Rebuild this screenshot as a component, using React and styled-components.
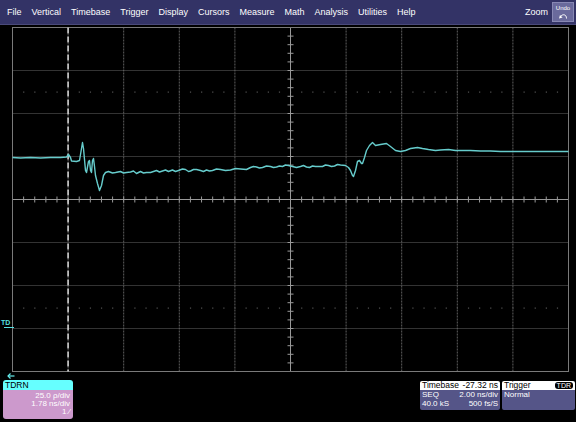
import styled, { createGlobalStyle } from "styled-components";

const GlobalStyle = createGlobalStyle`
  html, body { margin: 0; padding: 0; background: #000; }
  body { font-family: "Liberation Sans", Arial, sans-serif; }
`;

const Scope = styled.div`
  width: 576px;
  height: 422px;
  background: #000;
  overflow: hidden;
  display: flex;
  flex-direction: column;
`;

const MenuBar = styled.div`
  height: 24px;
  background: #333366;
  border-bottom: 1px solid #4a4a7a;
  display: flex;
  align-items: center;
  gap: 10px;
  padding: 0 2px 0 7px;
  color: #fff;
  font-size: 9px;
`;
const MenuItem = styled.span``;
const Spacer = styled.div`
  flex: 1;
`;
const ZoomGroup = styled.div`
  display: flex;
  align-items: center;
  gap: 4px;
`;
const UndoButton = styled.div`
  width: 22px;
  height: 20px;
  box-sizing: border-box;
  background: #6a6a9c;
  border: 1px solid #8888b4;
  display: flex;
  flex-direction: column;
  align-items: center;
  justify-content: center;
  font-size: 6px;
  line-height: 7px;
`;

const ScreenRow = styled.div`
  margin-top: 2px;
  height: 345px;
  display: flex;
`;
const Gutter = styled.div`
  width: 12px;
  position: relative;
`;
const TdMarker = styled.div`
  position: absolute;
  left: 1px;
  top: 292px;
  color: #55e0e0;
  font-size: 7px;
  font-weight: bold;
  line-height: 8px;
`;
const TdBar = styled.div`
  margin: 0 0 0 3px;
  width: 10px;
  height: 1px;
  background: #55e0e0;
`;

const Footer = styled.div`
  flex: 1;
  display: flex;
  justify-content: space-between;
  align-items: flex-start;
  padding: 0 1px 0 3px;
`;
const LeftCol = styled.div`
  display: flex;
  flex-direction: column;
`;
const BackArrow = styled.div`
  height: 8px;
  padding-left: 4px;
  display: flex;
  align-items: center;
`;
const TraceBox = styled.div`
  width: 70px;
  border-radius: 3px;
  overflow: hidden;
`;
const TraceHeader = styled.div`
  height: 10px;
  line-height: 10px;
  background: #66ffff;
  color: #000;
  font-size: 8.5px;
  padding-left: 2px;
`;
const TraceBody = styled.div`
  height: 29px;
  box-sizing: border-box;
  background: #cc99cc;
  color: #fff;
  font-size: 8px;
  line-height: 7.8px;
  text-align: right;
  padding: 2px 3px 0 0;
`;

const RightGroup = styled.div`
  display: flex;
  gap: 2px;
  margin-top: 9px;
`;
const InfoBox = styled.div`
  width: ${(p) => p.$w}px;
  border-radius: 2px;
  overflow: hidden;
`;
const InfoHeader = styled.div`
  height: 9px;
  line-height: 9px;
  background: #fff;
  color: #000;
  font-size: 8.5px;
  display: flex;
  justify-content: space-between;
  align-items: center;
  padding: 0 2px;
`;
const InfoBody = styled.div`
  height: 20px;
  box-sizing: border-box;
  background: #555588;
  color: #fff;
  font-size: 8px;
  line-height: 8.5px;
  padding: 1px 2px 0;
`;
const InfoRow = styled.div`
  display: flex;
  justify-content: space-between;
`;
const Badge = styled.span`
  background: #000;
  color: #fff;
  border-radius: 3px;
  font-size: 7px;
  line-height: 7px;
  padding: 0 2px;
`;

const menus = [
  "File",
  "Vertical",
  "Timebase",
  "Trigger",
  "Display",
  "Cursors",
  "Measure",
  "Math",
  "Analysis",
  "Utilities",
  "Help",
];

// trace points in page coords, shifted to the grid origin (12,27)
const trace = [
  [12, 157], [20, 157.5], [30, 157], [40, 157.5], [50, 157], [60, 157],
  [66, 156.5], [68, 154], [70, 157], [71, 160.5], [76, 161], [79, 160],
  [81, 148], [82, 142], [83, 148], [85, 170], [86, 172], [88, 161],
  [89, 160], [90, 170], [91, 172], [92, 160], [93, 158], [94, 166],
  [95, 175], [97, 183], [99, 190], [101, 185], [103, 175], [105, 172],
  [108, 171], [112, 172.5], [115, 172], [120, 171], [123, 172.5], [126, 172],
  [130, 171.5], [133, 170.5], [136, 173], [140, 171], [143, 172.5], [146, 172],
  [150, 172], [153, 171], [156, 170], [159, 171.5], [162, 170.5], [165, 169.5],
  [168, 171], [172, 169.5], [175, 171], [178, 170], [182, 168.5], [185, 169],
  [188, 171], [190, 170.5], [193, 169], [196, 169], [200, 170], [203, 171],
  [206, 169.5], [209, 170.5], [212, 170], [216, 168.5], [220, 169], [225, 170],
  [230, 169.5], [235, 168], [240, 168.5], [246, 169], [250, 167], [253, 166],
  [256, 166.5], [259, 167.5], [262, 167], [266, 165.5], [270, 166], [273, 167],
  [276, 166.5], [279, 165.5], [282, 166], [285, 164.5], [288, 165], [292, 166],
  [296, 167], [300, 166], [303, 165], [306, 166.5], [309, 167], [312, 165.5],
  [315, 166], [318, 166], [322, 166], [325, 164.5], [328, 165], [331, 166],
  [334, 165.5], [337, 164], [340, 164.5], [345, 165],
  [348, 167], [350, 170], [352, 175], [353, 176], [355, 170], [357, 161],
  [359, 160], [361, 163], [362, 163], [364, 157], [366, 150], [369, 145],
  [372, 142], [375, 145], [380, 144], [386, 143], [390, 146], [395, 150],
  [400, 151], [405, 150], [410, 148], [417, 147], [422, 148], [428, 149],
  [435, 150], [440, 149.5], [448, 149], [455, 150], [462, 150], [470, 150],
  [480, 150.5], [490, 150.5], [500, 151], [520, 151], [540, 151], [568, 151],
];

const W = 556;
const H = 344;
const DX = W / 10;
const DY = H / 8;

function Graticule() {
  const vLines = [];
  const hLines = [];
  const ticks = [];
  const dots = [];
  for (let i = 1; i < 10; i++) {
    if (i === 5) continue;
    vLines.push(
      <line key={"v" + i} x1={i * DX} y1={0} x2={i * DX} y2={H} stroke="#5e5e5e" strokeDasharray="2 1" />
    );
  }
  for (let j = 1; j < 8; j++) {
    if (j === 4) continue;
    hLines.push(
      <line key={"h" + j} x1={0} y1={j * DY} x2={W} y2={j * DY} stroke="#666" strokeDasharray="1 1" />
    );
  }
  for (let k = 1; k < 50; k++) {
    const x = (k * DX) / 5;
    ticks.push(<line key={"tx" + k} x1={x} y1={H / 2 - 3} x2={x} y2={H / 2 + 3} stroke="#999" />);
    dots.push(<rect key={"da" + k} x={x - 0.5} y={64} width={1.2} height={1.2} fill="#555" />);
    dots.push(<rect key={"db" + k} x={x - 0.5} y={280} width={1.2} height={1.2} fill="#555" />);
  }
  for (let k = 1; k < 40; k++) {
    const y = (k * DY) / 5;
    ticks.push(<line key={"ty" + k} x1={W / 2 - 3} y1={y} x2={W / 2 + 3} y2={y} stroke="#999" />);
  }
  const d = trace
    .map(([x, y], i) => `${i ? "L" : "M"}${x - 12} ${y - 27}`)
    .join(" ");

  return (
    <svg width={W + 1} height={H + 1} style={{ display: "block" }}>
      <g transform="translate(0.5 0.5)">
        {vLines}
        {hLines}
        {dots}
        <line x1={W / 2} y1={0} x2={W / 2} y2={H} stroke="#999" />
        <line x1={0} y1={H / 2} x2={W} y2={H / 2} stroke="#999" />
        {ticks}
        <rect x={0} y={0} width={W} height={H} fill="none" stroke="#7a7a7a" />
        <line x1={DX} y1={0} x2={DX} y2={H} stroke="#cfcfcf" strokeWidth={1.6} strokeDasharray="6 3" />
        <path d={d} fill="none" stroke="#66cccc" strokeWidth={1.4} strokeLinejoin="round" />
      </g>
    </svg>
  );
}

function UndoIcon() {
  return (
    <svg width="10" height="7" viewBox="0 0 10 7">
      <path d="M8.5 6.5 C8.5 2.5 5 1.5 2.5 4.5" fill="none" stroke="#fff" strokeWidth="1" />
      <path d="M1 6.5 L2 3 L4.5 5.5 Z" fill="#fff" />
    </svg>
  );
}

function LeftArrowIcon() {
  return (
    <svg width="8" height="6" viewBox="0 0 8 6">
      <path d="M1 3 H7.5" stroke="#66eeee" strokeWidth="1.2" />
      <path d="M3.5 0.5 L1 3 L3.5 5.5" fill="none" stroke="#66eeee" strokeWidth="1.2" />
    </svg>
  );
}

export default function App() {
  return (
    <Scope>
      <GlobalStyle />
      <MenuBar>
        {menus.map((m) => (
          <MenuItem key={m}>{m}</MenuItem>
        ))}
        <Spacer />
        <ZoomGroup>
          <MenuItem>Zoom</MenuItem>
          <UndoButton>
            Undo
            <UndoIcon />
          </UndoButton>
        </ZoomGroup>
      </MenuBar>
      <ScreenRow>
        <Gutter>
          <TdMarker>
            TD
            <TdBar />
          </TdMarker>
        </Gutter>
        <Graticule />
      </ScreenRow>
      <Footer>
        <LeftCol>
          <BackArrow>
            <LeftArrowIcon />
          </BackArrow>
          <TraceBox>
            <TraceHeader>TDRN</TraceHeader>
            <TraceBody>
              <div>25.0 ρ/div</div>
              <div>1.78 ns/div</div>
              <div>1 ⁄</div>
            </TraceBody>
          </TraceBox>
        </LeftCol>
        <RightGroup>
          <InfoBox $w={80}>
            <InfoHeader>
              <span>Timebase</span>
              <span>-27.32 ns</span>
            </InfoHeader>
            <InfoBody>
              <InfoRow>
                <span>SEQ</span>
                <span>2.00 ns/div</span>
              </InfoRow>
              <InfoRow>
                <span>40.0 kS</span>
                <span>500 fs/S</span>
              </InfoRow>
            </InfoBody>
          </InfoBox>
          <InfoBox $w={73}>
            <InfoHeader>
              <span>Trigger</span>
              <Badge>TDR</Badge>
            </InfoHeader>
            <InfoBody>
              <InfoRow>
                <span>Normal</span>
              </InfoRow>
            </InfoBody>
          </InfoBox>
        </RightGroup>
      </Footer>
    </Scope>
  );
}
